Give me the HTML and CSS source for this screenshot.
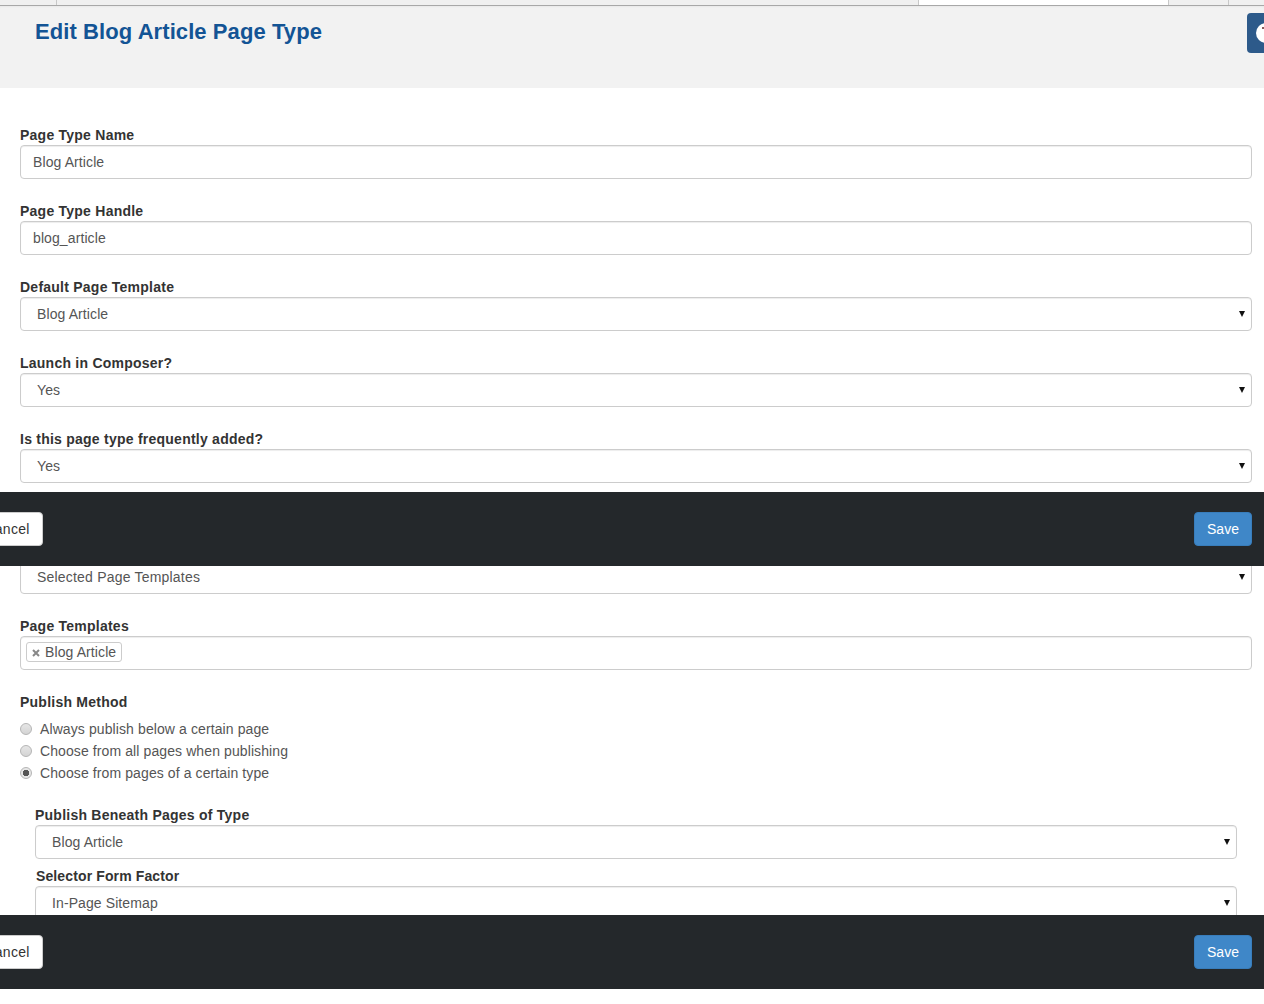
FILE: index.html
```html
<!DOCTYPE html>
<html lang="en">
<head>
    <meta charset="UTF-8">
    <meta name="viewport" content="width=device-width, initial-scale=1.0">
    <title>Edit Blog Article Page Type</title>
    <link rel="stylesheet" href="styles.css">
</head>
<body>
    <div class="tabs">
        <div class="tab tab-first"></div>
        <div class="tab tab-wide"></div>
        <div class="tab tab-active"></div>
        <div class="tab tab-small"></div>
    </div>

    <div class="header">
        <h1>Edit Blog Article Page Type</h1>
        <div class="help-btn"><span class="help-icon"></span></div>
    </div>

    <div class="panel panel-top">
        <div class="field">
            <label>Page Type Name</label>
            <div class="control">Blog Article</div>
        </div>
        <div class="field">
            <label>Page Type Handle</label>
            <div class="control">blog_article</div>
        </div>
        <div class="field">
            <label>Default Page Template</label>
            <div class="control select">Blog Article</div>
        </div>
        <div class="field">
            <label>Launch in Composer?</label>
            <div class="control select">Yes</div>
        </div>
        <div class="field">
            <label>Is this page type frequently added?</label>
            <div class="control select">Yes</div>
        </div>
    </div>

    <div class="action-bar">
        <button class="btn btn-cancel">Cancel</button>
        <button class="btn btn-save">Save</button>
    </div>

    <div class="panel panel-bottom">
        <div class="field">
            <div class="control select control-clipped">Selected Page Templates</div>
        </div>
        <div class="field">
            <label>Page Templates</label>
            <div class="control control-tags">
                <span class="tag">
                    <svg class="tag-x" width="8" height="8" viewBox="0 0 8 8"><path d="M1 1 7 7M7 1 1 7" stroke="#888" stroke-width="2" fill="none"/></svg>Blog Article
                </span>
            </div>
        </div>
        <div class="method">
            <label>Publish Method</label>
            <div class="radio-row"><span class="radio"></span>Always publish below a certain page</div>
            <div class="radio-row"><span class="radio"></span>Choose from all pages when publishing</div>
            <div class="radio-row"><span class="radio radio-on"></span>Choose from pages of a certain type</div>
        </div>
        <div class="nested">
            <div class="field field-tight">
                <label>Publish Beneath Pages of Type</label>
                <div class="control select">Blog Article</div>
            </div>
            <div class="field field-last">
                <label class="label-offset">Selector Form Factor</label>
                <div class="control select">In-Page Sitemap</div>
            </div>
        </div>
    </div>

    <div class="action-bar">
        <button class="btn btn-cancel">Cancel</button>
        <button class="btn btn-save">Save</button>
    </div>
</body>
</html>
```

FILE: styles.css
```css
html, body {
    margin: 0;
    padding: 0;
}
body {
    font-family: "Liberation Sans", Arial, sans-serif;
    font-size: 14px;
    line-height: 20px;
    letter-spacing: 0.1px;
    color: #555;
    background: #fff;
    overflow-x: hidden;
}

.tabs {
    display: flex;
    height: 5px;
    border-bottom: 1px solid #a8a8a8;
    background: #f0f0f0;
}
.tab {
    border-right: 1px solid #c8c8c8;
}
.tab-first { width: 56px; }
.tab-wide { width: 861px; }
.tab-active { width: 249px; background: #fff; }
.tab-small { width: 59px; }

.header {
    display: flex;
    justify-content: space-between;
    height: 82px;
    background: #f2f2f2;
    box-shadow: inset 0 2px 2px -1px rgba(0,0,0,.04);
}
h1 {
    margin: 13px 0 0 35px;
    font-size: 22px;
    line-height: 26px;
    font-weight: bold;
    letter-spacing: 0.08px;
    color: #135495;
}
.help-btn {
    width: 17px;
    height: 40px;
    margin-top: 7px;
    background: #2d5a8a;
    border-radius: 4px 0 0 4px;
    overflow: hidden;
}
.help-icon {
    position: relative;
    display: block;
    width: 20px;
    height: 20px;
    margin: 10px 0 0 9px;
    border-radius: 50%;
    background: #fff;
}
.help-icon::after {
    content: "";
    position: absolute;
    top: 4px;
    left: 6px;
    width: 2px;
    height: 2px;
    background: #8a5a5a;
}

.panel {
    overflow: hidden;
    padding: 0 12px 0 20px;
}
.panel-top {
    height: 404px;
    padding-top: 37px;
    box-sizing: border-box;
}
.panel-bottom {
    height: 349px;
    box-sizing: border-box;
}

.field {
    margin-bottom: 22px;
}
label {
    display: block;
    height: 20px;
    font-weight: bold;
    color: #333;
    letter-spacing: 0.24px;
}
.control {
    position: relative;
    height: 34px;
    box-sizing: border-box;
    padding: 6px 12px;
    border: 1px solid #ccc;
    border-radius: 4px;
    background: #fff;
    box-shadow: inset 0 1px 1px rgba(0,0,0,.075);
}
.select {
    padding-left: 16px;
}
.select::after {
    content: "";
    position: absolute;
    top: 13px;
    right: 6px;
    border-left: 3px solid transparent;
    border-right: 3px solid transparent;
    border-top: 6px solid #111;
}
.control-clipped {
    margin-top: -6px;
    letter-spacing: 0.2px;
}

.control-tags {
    padding: 5px;
}
.tag {
    display: inline-block;
    height: 20px;
    line-height: 18px;
    box-sizing: border-box;
    padding: 0 5px;
    border: 1px solid #ccc;
    border-radius: 3px;
    vertical-align: top;
}
.tag-x {
    margin-right: 5px;
}

.method {
    margin-bottom: 21px;
}
.method label {
    margin-bottom: 6px;
}
.radio-row {
    display: flex;
    align-items: center;
    gap: 8px;
    height: 22px;
}
.radio {
    width: 10px;
    height: 10px;
    border: 1px solid #b5b5b5;
    border-radius: 50%;
    background: linear-gradient(#e6e6e6, #d4d4d4);
}
.radio-on {
    background: radial-gradient(circle, #555 0 3px, #e6e6e6 3.5px);
}

.nested {
    padding-left: 15px;
    padding-right: 15px;
}
.field-tight {
    margin-bottom: 7px;
}
.field-last {
    margin-bottom: 0;
}
.label-offset {
    margin-left: 1px;
    letter-spacing: 0.12px;
}

.action-bar {
    display: flex;
    justify-content: space-between;
    align-items: center;
    height: 74px;
    padding-right: 12px;
    box-sizing: border-box;
    background: #24282b;
    overflow: hidden;
}
.btn {
    height: 34px;
    padding: 0 12px;
    font-family: inherit;
    font-size: 14px;
    border: 1px solid transparent;
    border-radius: 4px;
}
.btn-cancel {
    width: 72px;
    margin-left: -29px;
    background: #fff;
    border-color: #ccc;
    color: #333;
    letter-spacing: 0.3px;
}
.btn-save {
    width: 58px;
    background: #3f87c8;
    border-color: #387dbb;
    color: #fff;
    letter-spacing: 0;
}
```
